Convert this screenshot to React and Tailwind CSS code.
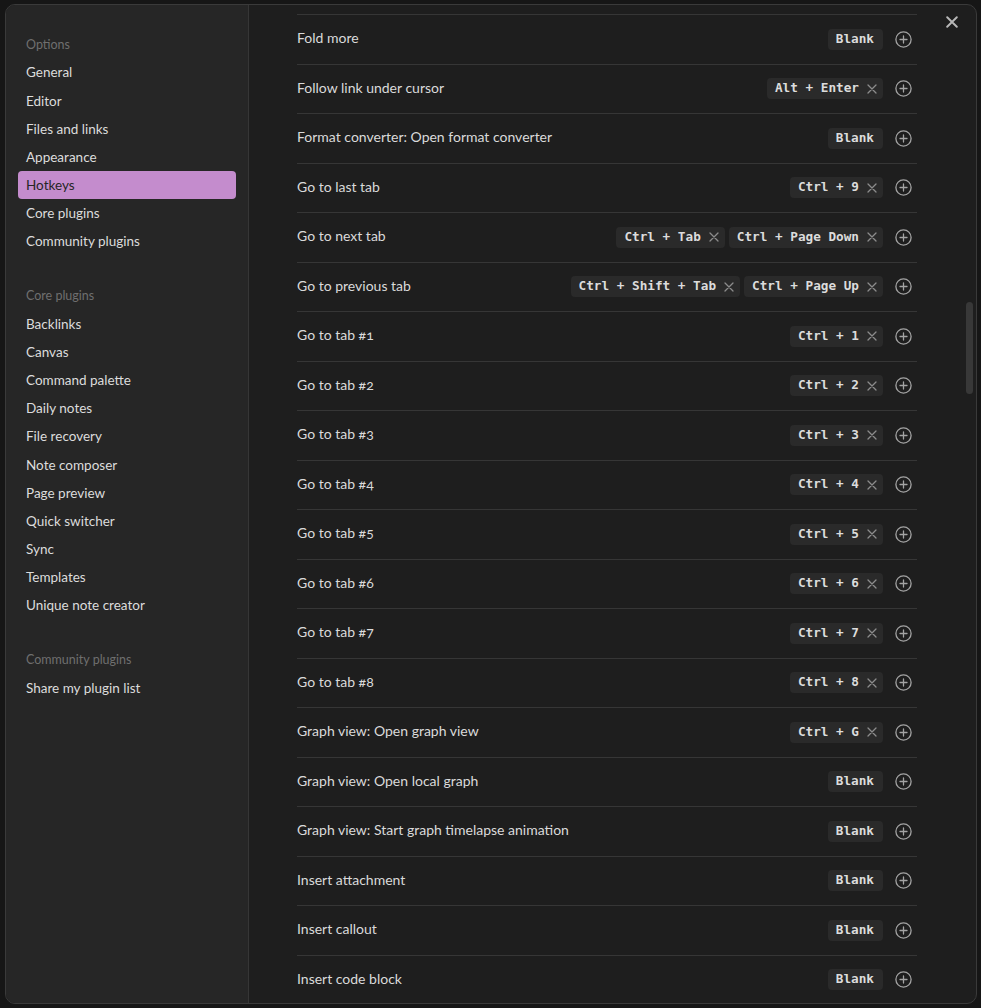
import React from "react";

const sidebar = [
  {
    title: "Options",
    items: ["General", "Editor", "Files and links", "Appearance", "Hotkeys", "Core plugins", "Community plugins"],
  },
  {
    title: "Core plugins",
    items: [
      "Backlinks",
      "Canvas",
      "Command palette",
      "Daily notes",
      "File recovery",
      "Note composer",
      "Page preview",
      "Quick switcher",
      "Sync",
      "Templates",
      "Unique note creator",
    ],
  },
  { title: "Community plugins", items: ["Share my plugin list"] },
];

const rows = [
  ["Fold more", []],
  ["Follow link under cursor", ["Alt + Enter"]],
  ["Format converter: Open format converter", []],
  ["Go to last tab", ["Ctrl + 9"]],
  ["Go to next tab", ["Ctrl + Tab", "Ctrl + Page Down"]],
  ["Go to previous tab", ["Ctrl + Shift + Tab", "Ctrl + Page Up"]],
  ["Go to tab #1", ["Ctrl + 1"]],
  ["Go to tab #2", ["Ctrl + 2"]],
  ["Go to tab #3", ["Ctrl + 3"]],
  ["Go to tab #4", ["Ctrl + 4"]],
  ["Go to tab #5", ["Ctrl + 5"]],
  ["Go to tab #6", ["Ctrl + 6"]],
  ["Go to tab #7", ["Ctrl + 7"]],
  ["Go to tab #8", ["Ctrl + 8"]],
  ["Graph view: Open graph view", ["Ctrl + G"]],
  ["Graph view: Open local graph", []],
  ["Graph view: Start graph timelapse animation", []],
  ["Insert attachment", []],
  ["Insert callout", []],
  ["Insert code block", []],
];

function XIcon({ size = 10, color = "#8c8c8c", width = 1.3 }) {
  return (
    <svg width={size} height={size} viewBox="0 0 10 10" fill="none">
      <path d="M1 1L9 9M9 1L1 9" stroke={color} strokeWidth={width} strokeLinecap="round" />
    </svg>
  );
}

function PlusCircle() {
  return (
    <svg width="17" height="17" viewBox="0 0 17 17" fill="none">
      <circle cx="8.5" cy="8.5" r="7.6" stroke="#a3a3a3" strokeWidth="1.3" />
      <path d="M8.5 5V12M5 8.5H12" stroke="#a3a3a3" strokeWidth="1.3" strokeLinecap="round" />
    </svg>
  );
}

function Chip({ label }) {
  return (
    <div className="flex h-[21px] items-center gap-[8px] rounded-[4px] bg-[#2a2a2a] pl-[8px] pr-[6px] text-[#dcdcdc]">
      <span className="font-['DejaVu_Sans_Mono',monospace] text-[12.7px] font-bold leading-none">{label}</span>
      <XIcon />
    </div>
  );
}

function Blank() {
  return (
    <div className="flex h-[21px] items-center rounded-[4px] bg-[#2a2a2a] pl-[8px] pr-[9px] text-[#dcdcdc]">
      <span className="font-['DejaVu_Sans_Mono',monospace] text-[12.7px] font-bold leading-none">Blank</span>
    </div>
  );
}

export default function App() {
  return (
    <div className="h-[1008px] w-[981px] overflow-hidden bg-[#161616] pb-[4px] pl-[5px] pr-[4px] pt-[4px] font-['Lato','Noto_Sans',sans-serif]">
      <div className="relative flex h-full overflow-hidden rounded-[10px] border border-[#3a3a3a] bg-[#1e1e1e]">
        {/* Sidebar */}
        <div className="flex w-[243px] shrink-0 flex-col gap-[25px] border-r border-[#363636] bg-[#262626] px-[12px] pt-[24px]">
          {sidebar.map((g) => (
            <div key={g.title} className="flex flex-col">
              <div className="flex h-[30px] items-center pl-[8px] pt-[2px] text-[12.5px] text-[#6f6f6f]">{g.title}</div>
              {g.items.map((it) => {
                const active = it === "Hotkeys";
                return (
                  <div
                    key={it}
                    className={
                      active
                        ? "flex h-[28.1px] items-center rounded-[4px] bg-[#c48ccd] pb-[1px] pl-[8px] text-[13.5px] text-[#262626]"
                        : "flex h-[28.1px] items-center pb-[1px] pl-[8px] text-[13.5px] text-[#dcdcdc]"
                    }
                  >
                    {it}
                  </div>
                );
              })}
            </div>
          ))}
        </div>

        {/* Content */}
        <div className="relative flex-1 overflow-hidden">
          <div className="flex flex-col pl-[48px] pr-[59px] pt-[9px]">
            {rows.map(([label, keys]) => (
              <div
                key={label}
                className="flex h-[49.5px] shrink-0 items-center justify-between border-t border-[#363636] pr-[5px]"
              >
                <span className="pb-[3px] text-[14px] text-[#dadada] oldstyle-nums">{label}</span>
                <div className="flex items-center">
                  <div className="flex items-center gap-[4px]">
                    {keys.length === 0 ? <Blank /> : keys.map((k) => <Chip key={k} label={k} />)}
                  </div>
                  <div className="ml-[12px] flex">
                    <PlusCircle />
                  </div>
                </div>
              </div>
            ))}
          </div>
          <div className="absolute right-[3px] top-[297px] h-[92px] w-[7px] rounded-full bg-[#383838]" />
        </div>

        <button className="absolute right-[18px] top-[11px] flex">
          <XIcon size={12} color="#b8b8b8" width={1.6} />
        </button>
      </div>
    </div>
  );
}
